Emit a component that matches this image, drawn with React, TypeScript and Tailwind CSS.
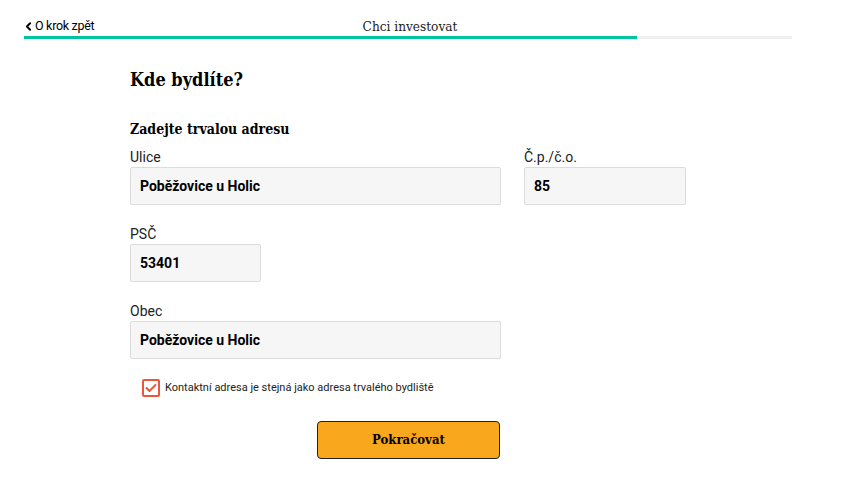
import { ChevronLeft } from "lucide-react"

const slab = { fontFamily: '"DejaVu Serif Condensed", "DejaVu Serif", "Liberation Serif", serif' }

function Field({ label, value, width }: { label: string; value: string; width: string }) {
  return (
    <div className={`flex flex-col ${width}`}>
      <label className="text-[14px] leading-[16px] text-[#222] mb-[2px]">{label}</label>
      <div className="h-[38px] flex items-center px-[9px] bg-[#f6f6f6] border border-[#dcdcdc] rounded-[2px] text-[14px] font-bold text-black">
        {value}
      </div>
    </div>
  )
}

export default function App() {
  return (
    <main className="w-[845px] h-[484px] bg-white text-black" style={{ fontFamily: 'Roboto, "Liberation Sans", sans-serif' }}>
      <header className="pt-[18px] px-[24px] w-[816px]">
        <div className="relative flex items-center h-[17px]">
          <a className="flex items-center text-[12.5px] text-black -ml-[2px]">
            <ChevronLeft size={13} strokeWidth={3.5} />
            <span className="tracking-[-0.3px]">O krok zpět</span>
          </a>
          <div className="absolute left-[4px] right-0 text-center text-[13.5px] text-[#222] pointer-events-none" style={slab}>
            Chci investovat
          </div>
        </div>
        <div className="mt-[1px] h-[3px] w-[768px] bg-[#f0f0f0]">
          <div className="h-full w-[613px] bg-[#00c3a0]" />
        </div>
      </header>

      <section className="ml-[130px] mt-[29px]">
        <h1 className="text-[18px] font-bold leading-[24px]" style={slab}>Kde bydlíte?</h1>
        <h2 className="mt-[27px] text-[14px] font-bold leading-[20px]" style={slab}>Zadejte trvalou adresu</h2>

        <div className="mt-[10px] flex gap-[23px]">
          <Field label="Ulice" value="Poběžovice u Holic" width="w-[371px]" />
          <Field label="Č.p./č.o." value="85" width="w-[162px]" />
        </div>
        <div className="mt-[21px]">
          <Field label="PSČ" value="53401" width="w-[131px]" />
        </div>
        <div className="mt-[21px]">
          <Field label="Obec" value="Poběžovice u Holic" width="w-[371px]" />
        </div>

        <label className="mt-[20px] ml-[12px] flex items-center gap-[5px]">
          <span className="w-[18px] h-[18px] border-2 border-[#e9583b] rounded-[2px] flex items-center justify-center">
            <svg width="12" height="10" viewBox="0 0 12 10" fill="none">
              <path d="M1.5 5 L4.5 8 L10.5 2" stroke="#e9583b" strokeWidth="2" strokeLinecap="round" strokeLinejoin="round" />
            </svg>
          </span>
          <span className="text-[11px] text-[#222]">Kontaktní adresa je stejná jako adresa trvalého bydliště</span>
        </label>

        <button className="mt-[24px] ml-[187px] w-[183px] h-[38px] bg-[#f9a71d] border border-[#222] rounded-[4px] text-[13px] font-bold text-black" style={slab}>
          Pokračovat
        </button>
      </section>
    </main>
  )
}
